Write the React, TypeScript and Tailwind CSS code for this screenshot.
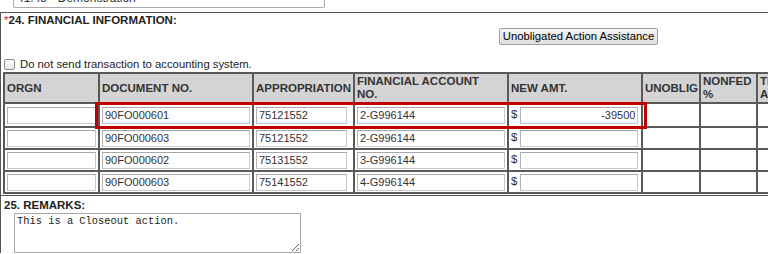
const rows = [
  { doc: "90FO000601", approp: "75121552", acct: "2-G996144", amt: "-39500" },
  { doc: "90FO000603", approp: "75121552", acct: "2-G996144", amt: "" },
  { doc: "90FO000602", approp: "75131552", acct: "3-G996144", amt: "" },
  { doc: "90FO000603", approp: "75141552", acct: "4-G996144", amt: "" },
];

function TextBox({ value, className = "" }: { value: string; className?: string }) {
  return (
    <input
      readOnly
      value={value}
      className={`h-[17px] border border-[#c8c8c8] border-t-[#a8a8a8] border-l-[#b4b4b4] bg-white px-[2px] text-[11px] text-[#333] outline-none ${className}`}
    />
  );
}

function HeaderCell({
  label,
  sub,
  className = "",
}: {
  label: string;
  sub?: string;
  className?: string;
}) {
  return (
    <th
      className={`border-2 border-[#5a5a5a] px-[2px] text-left align-middle text-[11.5px] font-bold leading-[13px] text-[#333] whitespace-nowrap ${className}`}
    >
      {label}
      {sub ? (
        <>
          <br />
          {sub}
        </>
      ) : null}
    </th>
  );
}

export default function App() {
  return (
    <div className="h-[254px] w-[768px] overflow-hidden bg-white font-['Liberation_Sans',Arial,sans-serif] text-[12px] text-[#222]">
      {/* select cut off at top */}
      <div className="flex h-[12px] items-end pb-[4px] pl-[13px]">
        <div className="relative flex h-[20px] w-[312px] shrink-0 items-center rounded-[2px] border border-[#a9a9a9] bg-white pl-[3px] text-[12px] text-[#333]">
          41.45 - Demonstration
          <span className="absolute right-[4px] top-[5px] text-[7px] leading-none text-black">▼</span>
        </div>
      </div>

      <div className="border-l border-t border-[#555]">
        <div className="flex h-[15px] items-center pl-[3px] text-[11.5px] font-bold">
          <span className="font-normal text-[#e02020]">*</span>
          <span>24. FINANCIAL INFORMATION:</span>
        </div>

        <div className="flex h-[17px] pl-[498px]">
          <button className="h-[17px] w-[159px] whitespace-nowrap rounded-[2px] border border-[#a0a0a0] bg-gradient-to-b from-[#f6f6f6] to-[#dedede] px-0 text-[11.3px] leading-none text-black">
            Unobligated Action Assistance
          </button>
        </div>

        <div className="mt-[13px] flex h-[13px] items-center gap-[5px] pl-[3px]">
          <span className="h-[11px] w-[11px] rounded-[2px] border border-[#8f8f8f] bg-gradient-to-b from-white to-[#e6e6e6]" />
          <span className="text-[11.3px] text-[#222]">Do not send transaction to accounting system.</span>
        </div>

        <div className="relative ml-[2px] mt-[1px] w-[830px]">
          <table className="w-[830px] table-fixed border-collapse">
            <colgroup>
              <col className="w-[95px]" />
              <col className="w-[154px]" />
              <col className="w-[101px]" />
              <col className="w-[154px]" />
              <col className="w-[134px]" />
              <col className="w-[58px]" />
              <col className="w-[57px]" />
              <col className="w-[77px]" />
            </colgroup>
            <thead>
              <tr className="h-[30px] bg-[#d4d4d4]">
                <HeaderCell label="ORGN" />
                <HeaderCell label="DOCUMENT NO." />
                <HeaderCell label="APPROPRIATION" />
                <HeaderCell label="FINANCIAL ACCOUNT" sub="NO." className="align-top pt-[1px]" />
                <HeaderCell label="NEW AMT." />
                <HeaderCell label="UNOBLIG" />
                <HeaderCell label="NONFED" sub="%" className="align-top pt-[1px]" />
                <HeaderCell label="TRANS" sub="AMT." className="align-top pt-[1px]" />
              </tr>
            </thead>
            <tbody>
              {rows.map((r, i) => (
                <tr key={i} className={i === 0 ? "h-[24px]" : "h-[22px]"}>
                  <td className="border-2 border-[#5a5a5a] px-[2px]">
                    <TextBox value="" className="w-[89px]" />
                  </td>
                  <td className="border-2 border-[#5a5a5a] px-[2px]">
                    <TextBox value={r.doc} className="w-[148px]" />
                  </td>
                  <td className="border-2 border-[#5a5a5a] px-[2px]">
                    <TextBox value={r.approp} className="w-[91px]" />
                  </td>
                  <td className="border-2 border-[#5a5a5a] px-[2px]">
                    <TextBox value={r.acct} className="w-[148px]" />
                  </td>
                  <td className="border-2 border-[#5a5a5a] px-[2px]">
                    <div className="flex items-center gap-[3px]">
                      <span className="text-[11.5px] text-[#333]">$</span>
                      <TextBox value={r.amt} className="w-[118px] text-right" />
                    </div>
                  </td>
                  <td className="border-2 border-[#5a5a5a]" />
                  <td className="border-2 border-[#5a5a5a]" />
                  <td className="border-2 border-[#5a5a5a]" />
                </tr>
              ))}
            </tbody>
          </table>
          {/* annotation highlight */}
          <div className="pointer-events-none absolute left-[92px] top-[30px] h-[27px] w-[552px] border-[3px] border-[#c00000]" />
        </div>

        <div className="mt-[1px] border-t border-[#555] pl-[3px] pt-[3px] text-[11.5px] font-bold leading-[13px]">
          25. REMARKS:
        </div>
        <div className="pl-[13px] pt-[1px]">
          <textarea
            readOnly
            defaultValue="This is a Closeout action."
            className="block h-[40px] w-[287px] border border-[#a9a9a9] px-[2px] py-[1px] font-['Liberation_Mono','Courier_New',monospace] text-[10.4px] leading-[12px] text-[#222] outline-none"
          />
        </div>
      </div>
    </div>
  );
}
